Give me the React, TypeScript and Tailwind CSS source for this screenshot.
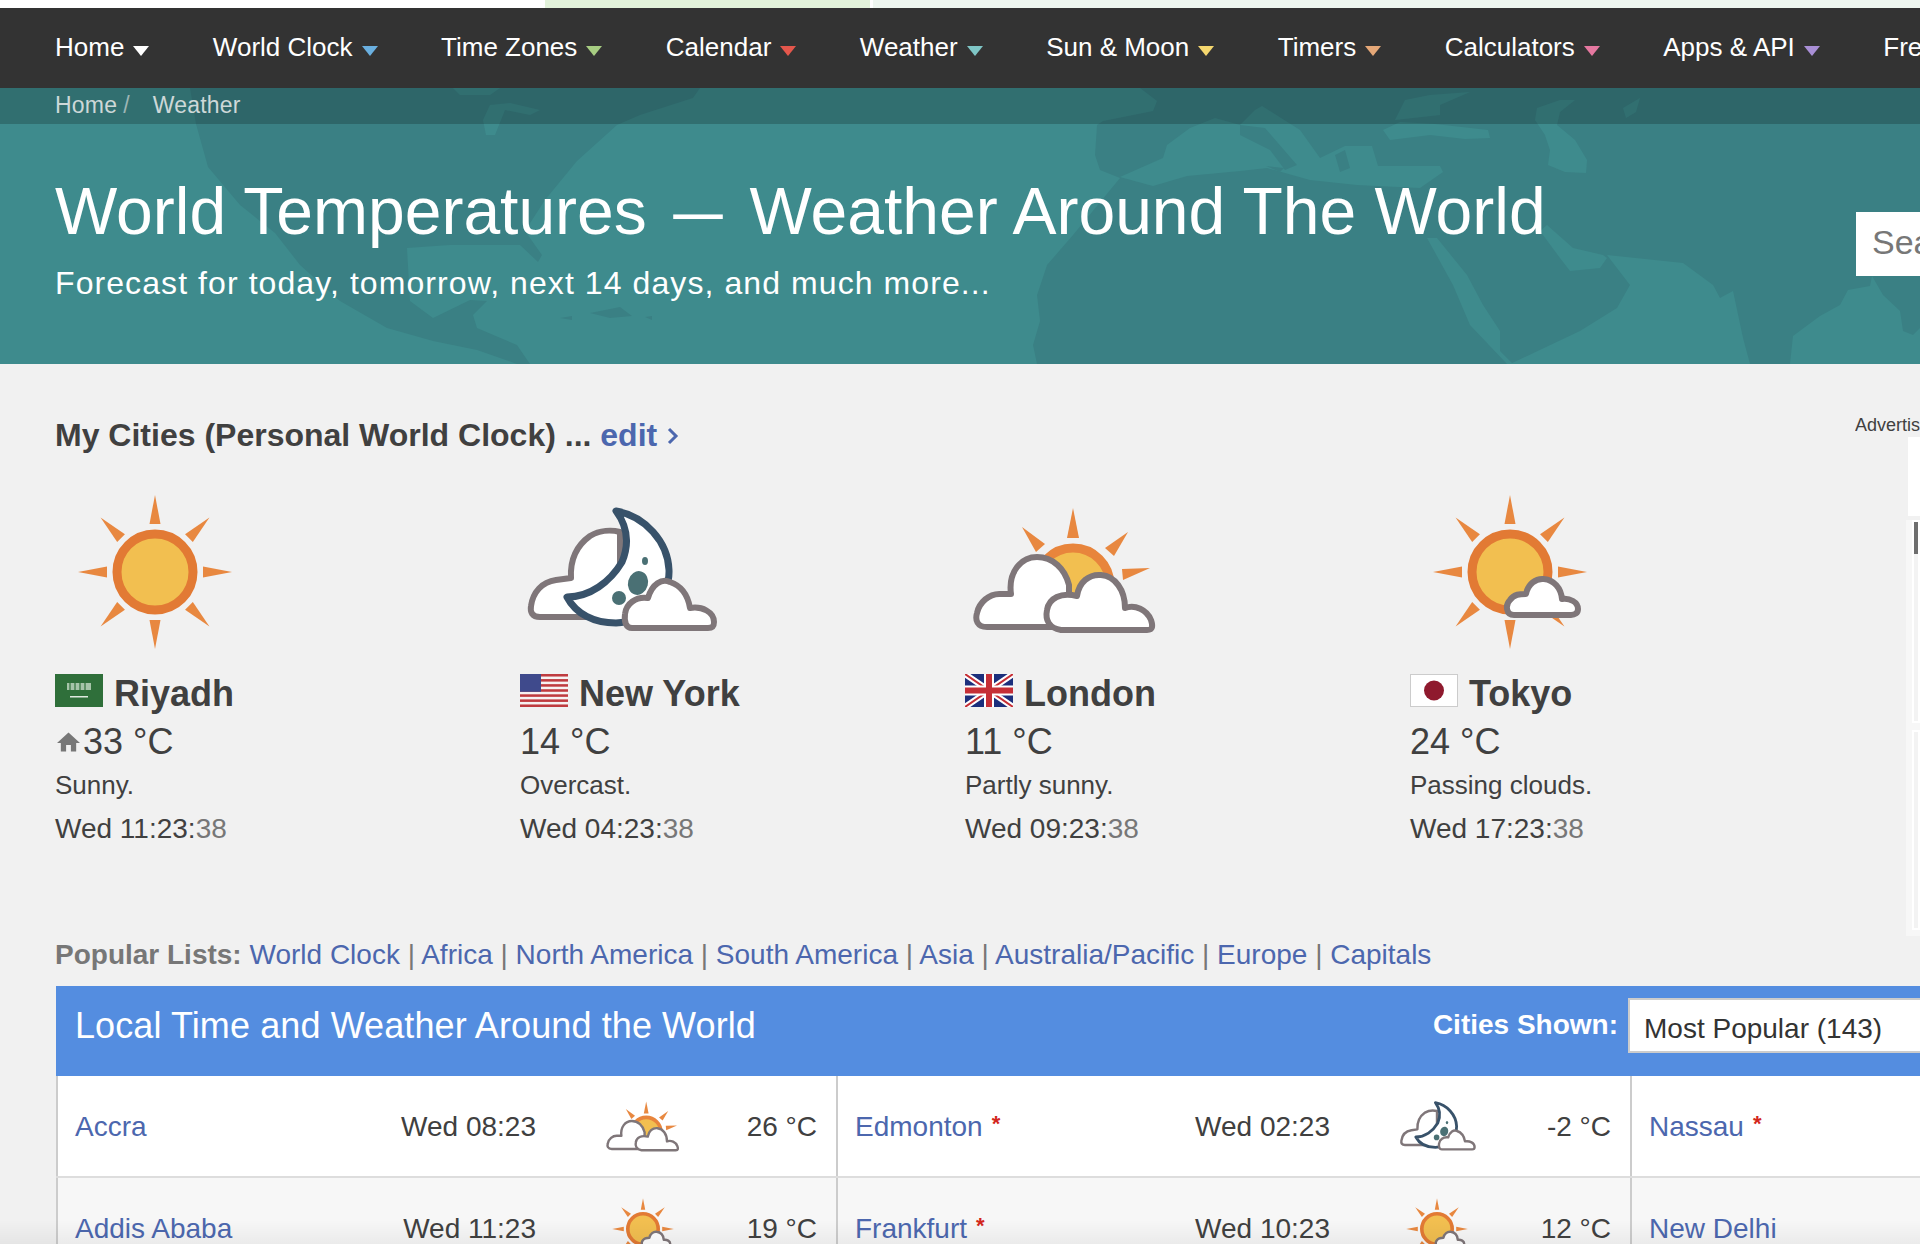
const navItems = [
  { label: 'Home', caret: 'fill-white' },
  { label: 'World Clock', caret: 'fill-[#6ab0e0]' },
  { label: 'Time Zones', caret: 'fill-[#a7cd82]' },
  { label: 'Calendar', caret: 'fill-[#e4574c]' },
  { label: 'Weather', caret: 'fill-[#7fc6c6]' },
  { label: 'Sun & Moon', caret: 'fill-[#f5d76e]' },
  { label: 'Timers', caret: 'fill-[#e5a878]' },
  { label: 'Calculators', caret: 'fill-[#e578a0]' },
  { label: 'Apps & API', caret: 'fill-[#a98fd6]' },
  { label: 'Free Fun', caret: 'fill-[#6ab0e0]' },
];

type IconKind = 'sun' | 'night' | 'partly' | 'passing';
type FlagKind = 'sa' | 'us' | 'uk' | 'jp';

const cities: { name: string; flag: FlagKind; icon: IconKind; temp: string; cond: string; time: string; home?: boolean }[] = [
  { name: 'Riyadh', flag: 'sa', icon: 'sun', temp: '33 °C', cond: 'Sunny.', time: 'Wed 11:23:', home: true },
  { name: 'New York', flag: 'us', icon: 'night', temp: '14 °C', cond: 'Overcast.', time: 'Wed 04:23:' },
  { name: 'London', flag: 'uk', icon: 'partly', temp: '11 °C', cond: 'Partly sunny.', time: 'Wed 09:23:' },
  { name: 'Tokyo', flag: 'jp', icon: 'passing', temp: '24 °C', cond: 'Passing clouds.', time: 'Wed 17:23:' },
];

const popular = ['World Clock', 'Africa', 'North America', 'South America', 'Asia', 'Australia/Pacific', 'Europe', 'Capitals'];

const rows: { name: string; star?: boolean; time: string; icon: IconKind; temp: string }[][] = [
  [
    { name: 'Accra', time: 'Wed 08:23', icon: 'partly', temp: '26 °C' },
    { name: 'Edmonton', star: true, time: 'Wed 02:23', icon: 'night', temp: '-2 °C' },
    { name: 'Nassau', star: true, time: '', icon: 'sun', temp: '' },
  ],
  [
    { name: 'Addis Ababa', time: 'Wed 11:23', icon: 'passing', temp: '19 °C' },
    { name: 'Frankfurt', star: true, time: 'Wed 10:23', icon: 'passing', temp: '12 °C' },
    { name: 'New Delhi', time: '', icon: 'sun', temp: '' },
  ],
];

function Caret({ color }: { color: string }) {
  return (
    <svg viewBox="0 0 16 10" className={`ml-[9px] mt-[7px] h-[10px] w-[16px] ${color}`}>
      <polygon points="0,0 16,0 8,10" />
    </svg>
  );
}

function WorldMap() {
  const water = '#3e8b8d';
  const land = '#3a8084';
  return (
    <svg viewBox="0 88 1920 276" className="absolute inset-0 h-full w-full" preserveAspectRatio="none">
      {/* north america */}
      <path
        fill={land}
        d="M190 88 L196 124 L208 167 L240 205 L275 233 L300 265 L340 301 L387 328 L433 341 L477 350 L517 364 L530 364 L517 345 L477 328 L473 315 L487 301 L470 300 L433 318 L410 301 L407 248 L450 245 L520 245 L538 262 L542 255 L525 231 L545 200 L577 161 L617 125 L640 115 L693 98 L700 88 Z"
      />
      <path fill={water} d="M483 120 L490 105 L510 103 L540 110 L530 115 L505 110 L495 135 L486 135 Z M453 88 L500 88 L490 95 L460 95 Z" />
      <path fill={land} d="M590 313 L620 307 L632 316 L610 318 Z M560 318 L572 316 L572 320 Z M645 317 L652 316 L652 320 Z" />
      {/* europe, africa, asia */}
      <path
        fill={land}
        d="M1140 88 L1157 101 L1153 111 L1103 121 L1097 125 L1095 155 L1100 170 L1120 178 L1073 235 L1047 265 L1037 295 L1040 321 L1033 345 L1037 364 L1510 364 L1580 331 L1617 308 L1630 285 L1607 255 L1683 263 L1713 285 L1720 298 L1733 291 L1743 338 L1750 364 L1790 364 L1793 336 L1820 316 L1840 305 L1848 290 L1870 286 L1872 276 L1883 295 L1900 311 L1903 331 L1913 335 L1920 328 L1920 88 Z"
      />
      {/* mediterranean and inland seas */}
      <path
        fill={water}
        d="M1120 177 L1153 186 L1187 176 L1240 171 L1267 168 L1310 180 L1357 185 L1420 188 L1443 172 L1440 166 L1378 166 L1372 146 L1345 146 L1320 158 L1300 130 L1262 106 L1255 110 L1240 125 L1215 118 L1190 128 L1167 145 L1163 158 Z"
      />
      <path fill={land} d="M1240 125 L1265 128 L1297 165 L1285 170 L1270 150 L1240 135 Z M1266 166 L1284 168 L1280 172 Z M1335 155 L1345 150 L1350 168 L1340 172 Z" />
      <path
        fill={water}
        d="M1383 130 L1400 122 L1435 124 L1488 130 L1490 138 L1465 139 L1430 135 L1390 140 Z M1395 120 L1405 100 L1430 95 L1470 92 L1440 105 L1440 115 Z M1537 108 L1560 100 L1575 100 L1560 112 L1557 125 L1575 140 L1587 160 L1586 173 L1565 172 L1548 165 L1550 150 L1545 135 L1535 120 Z M1623 108 L1640 98 L1636 112 L1626 118 Z"
      />
      <path fill={water} d="M1427 238 L1437 238 L1467 275 L1483 305 L1500 331 L1500 351 L1513 364 L1507 364 L1470 325 L1453 285 Z" />
      <path fill={water} d="M1547 225 L1573 248 L1603 255 L1607 258 L1600 268 L1570 271 L1560 258 L1540 231 Z" />
    </svg>
  );
}

function SunBody() {
  return (
    <>
      {[0, 45, 90, 135, 180, 225, 270, 315].map((a) => (
        <polygon key={a} points="100,23 94.5,52 105.5,52" fill="#e88840" transform={`rotate(${a} 100 100)`} />
      ))}
      <circle cx="100" cy="100" r="38" fill="#f2bf50" stroke="#e27a34" strokeWidth="9" />
    </>
  );
}

function WeatherIcon({ kind, small }: { kind: IconKind; small?: boolean }) {
  const cloud = { fill: '#fff', stroke: '#7f7679', strokeWidth: 6, strokeLinejoin: 'round' as const };
  return (
    <svg viewBox="0 20 200 160" className={small ? 'h-[64px] w-[80px] shrink-0' : 'h-[160px] w-[200px] shrink-0'}>
      {kind === 'sun' && <SunBody />}
      {kind === 'passing' && (
        <>
          <SunBody />
          <path
            {...cloud}
            d="M104 143 C96 143 95 133 100 128 C104 122 110 122 116 122 C118 112 126 106 134 107 C144 108 151 116 152 127 C160 126 168 130 168 137 C168 141 165 143 161 143 Z"
          />
        </>
      )}
      {kind === 'partly' && (
        <>
          <polygon points="108,36 102,66 114,66" fill="#e88840" />
          <polygon points="57,55 71,80 80,72" fill="#e88840" />
          <polygon points="163,60 140,76 149,84" fill="#e88840" />
          <polygon points="185,96 157,97 158,108" fill="#e88840" />
          <circle cx="108" cy="113" r="37" fill="#f2bf50" stroke="#e8853c" strokeWidth="9" />
          <path
            {...cloud}
            d="M22 155 C12 155 10 148 12 141 C14 131 24 121 36 122 L46 122 C43 100 56 85 72 85 C88 85 100 97 104 113 L104 155 Z"
          />
          <path
            {...cloud}
            d="M96 158 C84 156 80 148 82 138 C84 126 96 120 112 124 C114 110 124 102 136 103 C150 104 160 118 160 136 C170 132 182 138 186 148 C188 154 188 158 182 158 Z"
          />
        </>
      )}
      {kind === 'night' && (
        <>
          <path
            {...cloud}
            d="M20 145 C12 145 10 140 11 134 C13 120 22 110 36 108 L51 106 C50 88 56 74 70 64 C80 58 92 58 100 60 L100 145 Z"
          />
          <path
            d="M96 39 C125 44 148 70 149 98 C150 125 125 150 96 151 C74 151 56 142 47 125 C70 125 90 110 102 90 C109 73 108 55 96 39 Z"
            fill="#fff"
            stroke="#38526a"
            strokeWidth="7"
            strokeLinejoin="round"
          />
          <ellipse cx="118" cy="111" rx="10" ry="12" fill="#4a7074" transform="rotate(15 118 111)" />
          <circle cx="99" cy="126" r="7" fill="#4a7074" />
          <ellipse cx="125" cy="89" rx="3" ry="4" fill="#4a7074" />
          <path
            {...cloud}
            d="M112 156 C106 156 104 150 105 142 C106 132 116 124 128 126 C132 112 142 106 150 110 C162 114 168 124 170 136 C182 134 194 140 194 150 C194 155 192 156 188 156 Z"
          />
        </>
      )}
    </svg>
  );
}

function Flag({ kind }: { kind: FlagKind }) {
  return (
    <svg viewBox="0 0 48 33" className="mb-[8px] h-[33px] w-[48px] shrink-0">
      {kind === 'sa' && (
        <>
          <rect width="48" height="33" fill="#2f6f3a" />
          <rect x="12" y="9" width="24" height="7" fill="#cfe0cf" opacity="0.75" />
          <path d="M15 9 v7 M20 9 v7 M25 9 v7 M30 9 v7" stroke="#2f6f3a" strokeWidth="1.2" />
          <rect x="15" y="22" width="18" height="1.5" fill="#dfeadf" />
        </>
      )}
      {kind === 'us' && (
        <>
          <rect width="48" height="33" fill="#f6f2f2" />
          {[0, 2, 4, 6, 8, 10, 12].map((i) => (
            <rect key={i} y={(i * 33) / 13} width="48" height={33 / 13} fill="#bf3b3f" />
          ))}
          <rect width="21" height="17.8" fill="#3f4a8c" />
        </>
      )}
      {kind === 'uk' && (
        <>
          <rect width="48" height="33" fill="#1c2f7c" />
          <path d="M0 0 L48 33 M48 0 L0 33" stroke="#fff" strokeWidth="6" />
          <path d="M0 0 L48 33 M48 0 L0 33" stroke="#c62f36" strokeWidth="2" />
          <path d="M24 0 V33 M0 16.5 H48" stroke="#fff" strokeWidth="10" />
          <path d="M24 0 V33 M0 16.5 H48" stroke="#c62f36" strokeWidth="6" />
        </>
      )}
      {kind === 'jp' && (
        <>
          <rect x="0.5" y="0.5" width="47" height="32" fill="#fff" stroke="#ccc" />
          <ellipse cx="24" cy="16.5" rx="10" ry="10" fill="#8f1a2e" />
        </>
      )}
    </svg>
  );
}

function CityCard({ city }: { city: (typeof cities)[number] }) {
  return (
    <div className="flex flex-col">
      <WeatherIcon kind={city.icon} />
      <div className="mt-[18px] flex h-[48px] items-center">
        <Flag kind={city.flag} />
        <span className="ml-[11px] text-[36px] leading-[48px] font-bold">{city.name}</span>
      </div>
      <div className="flex h-[47px] items-center text-[36px] leading-[48px]">
        {city.home && (
          <svg viewBox="0 0 24 20" className="mr-[3px] ml-[2px] h-[20px] w-[23px] fill-[#777]">
            <path d="M12 0 L24 11 L20 11 L20 20 L14.5 20 L14.5 13 L9.5 13 L9.5 20 L4 20 L4 11 L0 11 Z" />
          </svg>
        )}
        {city.temp}
      </div>
      <div className="h-[40px] text-[26px] leading-[40px]">{city.cond}</div>
      <div className="h-[48px] text-[28px] leading-[48px]">
        {city.time}
        <span className="text-[#777]">38</span>
      </div>
    </div>
  );
}

function TableCell({ cell, className }: { cell: (typeof rows)[number][number]; className: string }) {
  return (
    <div className={`flex items-center pt-[2px] pr-[19px] pl-[17px] ${className}`}>
      <div className="flex-1 text-[#4c67ae]">
        {cell.name}
        {cell.star && <span className="ml-[9px] align-[5px] text-[22px] leading-none font-bold text-[#d3261c]">*</span>}
      </div>
      {cell.time && (
        <>
          <div>{cell.time}</div>
          <div className="ml-[67px]">
            <WeatherIcon kind={cell.icon} small />
          </div>
          <div className="w-[134px] text-right">{cell.temp}</div>
        </>
      )}
    </div>
  );
}

export default function App() {
  return (
    <div className="relative h-[1244px] w-[1920px] overflow-hidden bg-[#f1f1f1] font-['Liberation_Sans',Arial,sans-serif] text-[#404040]">
      <div className="flex h-[8px]">
        <div className="w-[545px] bg-white" />
        <div className="w-[325px] bg-[#e2f2da]" />
        <div className="w-[3px] bg-white" />
        <div className="flex-1 bg-[#eef6f0]" />
      </div>

      <nav className="flex h-[80px] items-center gap-[63.5px] overflow-hidden bg-[#333] pb-[2px] pl-[55px] text-[26px] leading-[32px] whitespace-nowrap text-white">
        {navItems.map((item) => (
          <div key={item.label} className="flex shrink-0 items-center">
            {item.label}
            <Caret color={item.caret} />
          </div>
        ))}
      </nav>

      <header className="relative h-[276px] overflow-hidden bg-[#3e8b8d] text-white">
        <WorldMap />
        <div className="relative flex h-[36px] items-center bg-black/20 pb-[3px] pl-[55px] text-[23px] leading-[30px] tracking-[0.2px] text-[#cdd8d8]">
          <span>Home</span>
          <span className="ml-[6px] text-[#9db5b5]">/</span>
          <span className="ml-[23px]">Weather</span>
        </div>
        <div className="relative flex pl-[55px]">
          <div className="flex-1 whitespace-nowrap">
            <h1 className="pt-[54px] text-[66px] leading-[66px]">
              World Temperatures <span className="inline-block scale-x-75">—</span> Weather Around The World
            </h1>
            <p className="mt-[19px] text-[32px] leading-[40px] tracking-[1.08px]">Forecast for today, tomorrow, next 14 days, and much more...</p>
          </div>
          <div className="mt-[88px] h-[64px] w-[64px] shrink-0 overflow-hidden bg-white pl-[16px] text-[34px] leading-[60px] whitespace-nowrap text-[#777]">
            Search...
          </div>
        </div>
      </header>

      <section className="flex pl-[55px]">
        <div className="w-[1780px]">
          <h2 className="flex items-center pt-[51px] text-[32px] leading-[40px] font-bold whitespace-pre">
            My Cities (Personal World Clock) ... <span className="text-[#4c67ae]">edit</span>
            <svg viewBox="0 0 12 18" className="mt-[2px] ml-[10px] h-[18px] w-[12px] fill-none stroke-[#4c67ae] stroke-[3]">
              <polyline points="2,2 9,9 2,16" />
            </svg>
          </h2>
          <div className="mt-[37px] grid grid-cols-[465px_445px_445px_425px]">
            {cities.map((city) => (
              <CityCard key={city.name} city={city} />
            ))}
          </div>
        </div>
        <aside className="ml-[20px] w-[65px] shrink-0 overflow-hidden pt-[49px]">
          <div className="h-[24px] text-[18px] leading-[24px] whitespace-nowrap">Advertising</div>
          <div className="ml-[53px] h-[79px] bg-white" />
          <div className="mt-[4px] ml-[51px] flex h-[416px] flex-col gap-[7px] bg-[#f7f7f7] pl-[6px]">
            <div className="h-[203px] border-2 border-white bg-[#f3f3f3]">
              <div className="h-[32px] bg-[#6e6e6e]" />
            </div>
            <div className="h-[200px] border-2 border-white bg-[#f3f3f3]" />
          </div>
        </aside>
      </section>

      <div className="pt-[1px] pl-[55px] text-[28px] leading-[36px] whitespace-nowrap text-[#777]">
        <span className="font-bold">Popular Lists:</span>{' '}
        {popular.map((item, i) => (
          <span key={item}>
            {i > 0 && ' | '}
            <span className="text-[#4c67ae]">{item}</span>
          </span>
        ))}
      </div>

      <div className="mt-[13px] ml-[56px] text-[28px] leading-[36px]">
        <div className="flex h-[90px] items-start bg-[#548de0] pl-[19px] text-white">
          <div className="flex-1 pt-[16px] text-[36px] leading-[48px] tracking-[0.1px]">Local Time and Weather Around the World</div>
          <div className="mt-[21px] mr-[10px] font-bold">Cities Shown:</div>
          <div className="mt-[12px] flex h-[55px] w-[292px] items-center border-2 border-r-0 border-[#ccc] bg-white pt-[6px] pl-[14px] text-[#333]">Most Popular (143)</div>
        </div>
        {rows.map((row, i) => (
          <div key={i} className={`flex h-[102px] border-b-2 border-[#ddd] ${i === 0 ? 'bg-white' : 'bg-[#f7f7f7]'}`}>
            <TableCell cell={row[0]} className="w-[782px] border-x-2 border-[#ccc]" />
            <TableCell cell={row[1]} className="w-[794px] border-r-2 border-[#ccc]" />
            <TableCell cell={row[2]} className="flex-1" />
          </div>
        ))}
      </div>

      <div className="pointer-events-none absolute inset-x-0 bottom-0 h-[24px] bg-gradient-to-t from-black/5 to-transparent" />
    </div>
  );
}
